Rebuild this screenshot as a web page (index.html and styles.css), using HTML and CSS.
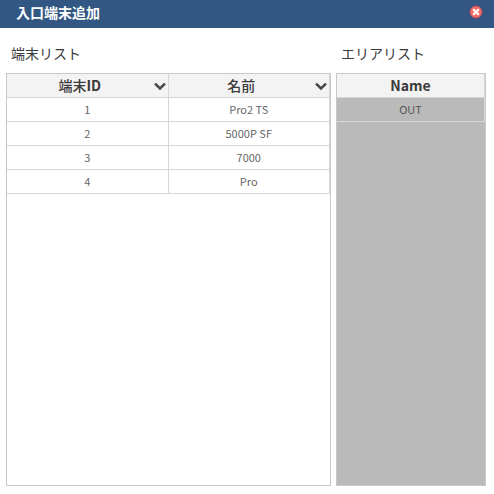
FILE: index.html
```html
<!DOCTYPE html>
<html lang="ja">
<head>
<meta charset="utf-8">
<title>入口端末追加</title>
<link rel="stylesheet" href="styles.css">
</head>
<body>
<header class="titlebar">
  <h1 class="title">入口端末追加</h1>
  <button class="close" type="button" aria-label="閉じる">
    <svg width="14" height="14" viewBox="0 0 14 14" aria-hidden="true">
      <circle cx="7" cy="7" r="6.4" fill="#ee6a68" stroke="#583f58" stroke-width="0.8"/>
      <path d="M4.2 4.2l5.6 5.6M9.8 4.2l-5.6 5.6" stroke="#fff" stroke-width="2.2"/>
    </svg>
  </button>
</header>
<main class="content">
  <section class="list terminals">
    <h2 class="label">端末リスト</h2>
    <div class="panel">
      <table class="grid">
        <thead>
          <tr>
            <th scope="col"><div class="head"><span class="head-text">端末<b>ID</b></span><button class="sort" type="button" aria-label="端末IDのメニュー"><svg width="14" height="10" viewBox="0 0 14 10" aria-hidden="true"><path d="M2 2.6l5 4.8 5-4.8" fill="none" stroke="#484848" stroke-width="2.6"/></svg></button></div></th>
            <th scope="col"><div class="head"><span class="head-text">名前</span><button class="sort" type="button" aria-label="名前のメニュー"><svg width="14" height="10" viewBox="0 0 14 10" aria-hidden="true"><path d="M2 2.6l5 4.8 5-4.8" fill="none" stroke="#484848" stroke-width="2.6"/></svg></button></div></th>
          </tr>
        </thead>
        <tbody>
          <tr><td>1</td><td>Pro2 TS</td></tr>
          <tr><td>2</td><td>5000P SF</td></tr>
          <tr><td>3</td><td>7000</td></tr>
          <tr><td>4</td><td>Pro</td></tr>
        </tbody>
      </table>
    </div>
  </section>
  <section class="list areas">
    <h2 class="label">エリアリスト</h2>
    <div class="panel">
      <table class="grid">
        <thead>
          <tr><th scope="col"><b>Name</b></th></tr>
        </thead>
        <tbody>
          <tr><td>OUT</td></tr>
        </tbody>
      </table>
    </div>
  </section>
</main>
</body>
</html>
```
FILE: styles.css
```css
* {
  box-sizing: border-box;
}

body {
  margin: 0;
  min-height: 100vh;
  display: flex;
  flex-direction: column;
  background: #fff;
  color: #3a3a3a;
  font-family: "Noto Sans CJK JP", sans-serif;
}

.titlebar {
  display: flex;
  align-items: center;
  justify-content: space-between;
  height: 28px;
  padding: 0 11px 4px 16px;
  background: #315782;
}

.title {
  margin: 0;
  color: #fff;
  font-size: 14px;
  font-weight: 700;
  line-height: 24px;
}

.close,
.sort {
  display: block;
  padding: 0;
  border: 0;
  background: none;
}

.close svg,
.sort svg {
  display: block;
}

.content {
  flex: 1;
  display: flex;
  gap: 5px;
  padding: 14px 8px 8px 6px;
}

.list {
  display: flex;
  flex-direction: column;
  gap: 9px;
  min-width: 0;
}

.terminals {
  flex: 325 1 0;
}

.areas {
  flex: 150 1 0;
}

.label {
  margin: 0;
  padding-left: 5px;
  font-size: 14px;
  font-weight: 400;
  line-height: 22px;
}

.panel {
  flex: 1;
  border: 1px solid #c8c8c8;
}

.areas .panel {
  background: #bababa;
}

.grid {
  width: 100%;
  table-layout: fixed;
  border-collapse: separate;
  border-spacing: 0;
}

.grid th,
.grid td {
  height: 24px;
  padding: 0;
  border-right: 1px solid #d6d6d6;
  border-bottom: 1px solid #d6d6d6;
  text-align: center;
}

.grid th {
  background: #f3f3f3;
  font-size: 14px;
  font-weight: 500;
  line-height: 23px;
}

.grid td {
  color: #666;
  font-size: 11px;
  font-weight: 400;
  line-height: 23px;
}

.areas td {
  color: #555;
}

.head {
  display: flex;
  align-items: center;
  padding-right: 1px;
}

.head-text {
  flex: 1;
}
```
